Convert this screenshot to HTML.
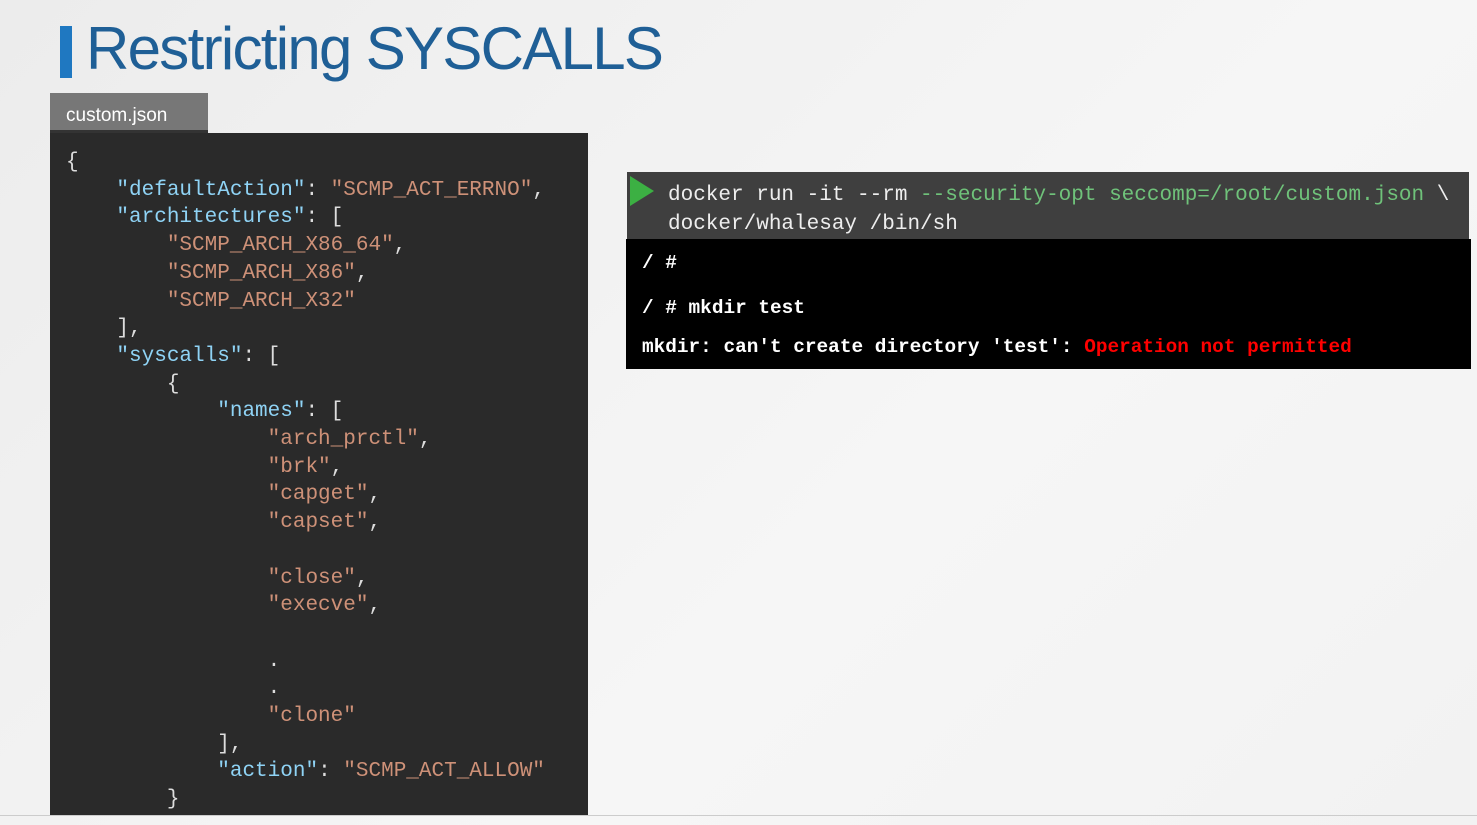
<!DOCTYPE html>
<html><head><meta charset="utf-8"><style>
body{margin:0;width:1477px;height:825px;overflow:hidden;background:linear-gradient(135deg,#ececec,#f6f6f6 60%,#f2f2f2);position:relative;font-family:"Liberation Sans",sans-serif}
.bar{position:absolute;left:60px;top:26px;width:12px;height:52px;background:#1f78c1}
.title{position:absolute;left:86px;top:14px;font-size:60px;color:#1f5f96;letter-spacing:-1.7px}
.tab{position:absolute;left:50px;top:93px;width:158px;height:40px;background:#777;color:#fff;font-size:19px;line-height:46px;padding-left:16px;box-sizing:border-box;border-bottom:3px solid #333}
.code{position:absolute;left:50px;top:133px;width:538px;height:682px;background:#2a2a2a;overflow:hidden}
.code pre{margin:0;position:absolute;left:16px;top:16px;font-family:"Liberation Mono",monospace;font-size:21px;line-height:27.7px;color:#ddd}
.k{color:#8fd3f5}.s{color:#ce9178}
.hdr{position:absolute;left:627px;top:172px;width:842px;height:67px;background:#3f3f3f}
.hdr pre{margin:0;position:absolute;left:41px;top:9px;font-family:"Liberation Mono",monospace;font-size:21px;line-height:29px;color:#eee}
.g{color:#6fc27a}
.tri{position:absolute;left:3px;top:4px;width:0;height:0;border-left:24px solid #3cb043;border-top:15px solid transparent;border-bottom:15px solid transparent}
.term{position:absolute;left:626px;top:239px;width:845px;height:130px;background:#000;color:#fff;font-family:"Liberation Mono",monospace;font-weight:bold;font-size:19.4px}
.term div{position:absolute;left:16px}
.r{color:#f00}
.bot{position:absolute;left:0;top:815px;width:1477px;height:1px;background:#ccc}
</style></head><body>
<div class="bar"></div><div class="title">Restricting SYSCALLS</div>
<div class="tab">custom.json</div>
<div class="code"><pre>{
    <span class="k">"defaultAction"</span>: <span class="s">"SCMP_ACT_ERRNO"</span>,
    <span class="k">"architectures"</span>: [
        <span class="s">"SCMP_ARCH_X86_64"</span>,
        <span class="s">"SCMP_ARCH_X86"</span>,
        <span class="s">"SCMP_ARCH_X32"</span>
    ],
    <span class="k">"syscalls"</span>: [
        {
            <span class="k">"names"</span>: [
                <span class="s">"arch_prctl"</span>,
                <span class="s">"brk"</span>,
                <span class="s">"capget"</span>,
                <span class="s">"capset"</span>,

                <span class="s">"close"</span>,
                <span class="s">"execve"</span>,

                .
                .
                <span class="s">"clone"</span>
            ],
            <span class="k">"action"</span>: <span class="s">"SCMP_ACT_ALLOW"</span>
        }</pre></div>
<div class="hdr"><div class="tri"></div><pre>docker run -it --rm <span class="g">--security-opt seccomp=/root/custom.json</span> \
docker/whalesay /bin/sh</pre></div>
<div class="term">
<div style="top:13px">/ #</div>
<div style="top:58px">/ # mkdir test</div>
<div style="top:97px">mkdir: can't create directory 'test': <span class="r">Operation not permitted</span></div>
</div>
<div class="bot"></div>
</body></html>
